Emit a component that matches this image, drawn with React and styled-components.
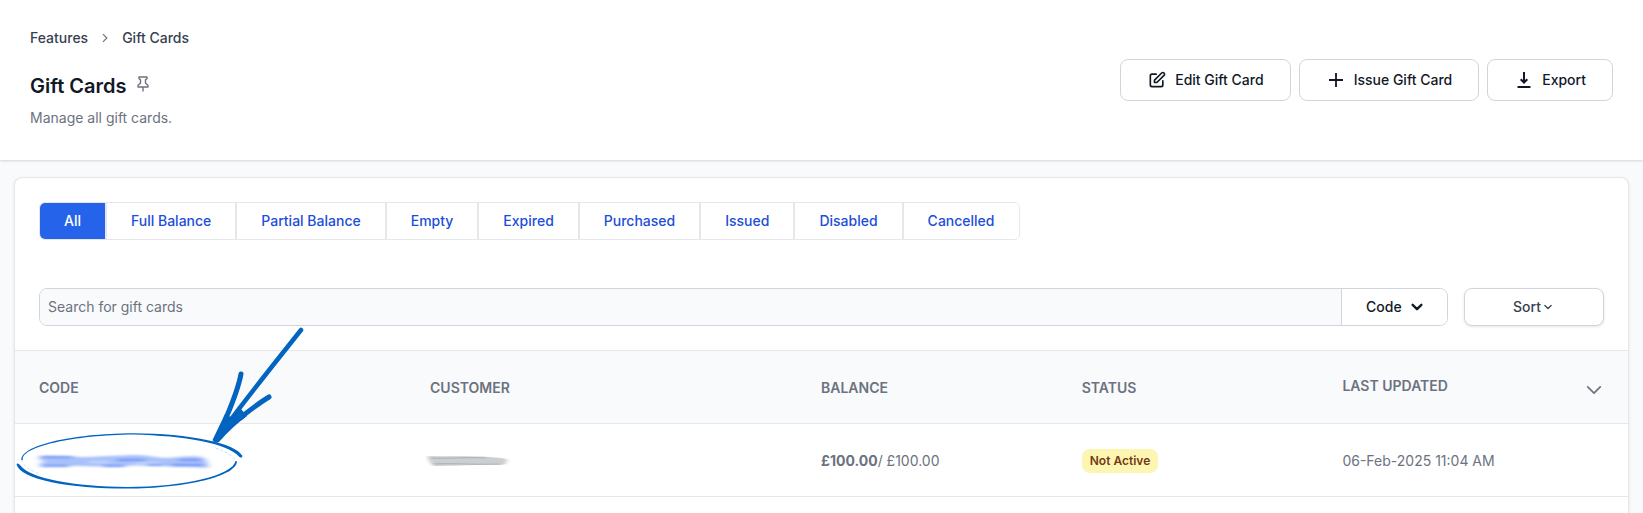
import React, { useState } from "react";
import styled, { createGlobalStyle, css } from "styled-components";

const TABS = [
  "All",
  "Full Balance",
  "Partial Balance",
  "Empty",
  "Expired",
  "Purchased",
  "Issued",
  "Disabled",
  "Cancelled",
];

function App() {
  const [active, setActive] = useState("All");

  return (
    <Page>
      <GlobalStyle />
      <Header>
        <Breadcrumb aria-label="Breadcrumb">
          <a href="#features">Features</a>
          <svg width="12" height="12" viewBox="0 0 12 12" fill="none">
            <path d="M4 2.2 7.800 6 4 9.800" stroke="#6b7280" strokeWidth="1.2" />
          </svg>
          <a href="#gift-cards">Gift Cards</a>
        </Breadcrumb>
        <HeaderRow>
          <div>
            <TitleRow>
              <h1>Gift Cards</h1>
              <PinButton type="button" aria-label="Pin page">
                <PinIcon />
              </PinButton>
            </TitleRow>
            <Description>Manage all gift cards.</Description>
          </div>
          <Actions>
            <ActionButton type="button">
              <EditIcon />
              Edit Gift Card
            </ActionButton>
            <ActionButton type="button">
              <PlusIcon />
              Issue Gift Card
            </ActionButton>
            <ActionButton type="button">
              <ExportIcon />
              Export
            </ActionButton>
          </Actions>
        </HeaderRow>
      </Header>

      <Card>
        <Tabs>
          {TABS.map((tab) => (
            <Tab
              key={tab}
              type="button"
              $active={tab === active}
              onClick={() => setActive(tab)}
            >
              {tab}
            </Tab>
          ))}
        </Tabs>

        <Filters>
          <SearchGroup>
            <SearchInput
              type="text"
              aria-label="Search for gift cards"
              placeholder="Search for gift cards"
            />
            <SelectWrap>
              <select aria-label="Search by" defaultValue="Code">
                <option>Code</option>
                <option>Customer</option>
              </select>
              <Chevron size={14} weight={4} />
            </SelectWrap>
          </SearchGroup>
          <SortButton type="button">
            Sort
            <Chevron size={10} weight={3} />
          </SortButton>
        </Filters>

        <Table>
          <colgroup>
            <Col $width={24} />
            <Col $width={24} />
            <Col $width={16} />
            <Col $width={16} />
            <Col $width={19} />
          </colgroup>
          <thead>
            <tr>
              <th>Code</th>
              <th>Customer</th>
              <th>Balance</th>
              <th>Status</th>
              <th>
                <SortHeader type="button">
                  Last updated
                  <Chevron size={20} weight={2} />
                </SortHeader>
              </th>
            </tr>
          </thead>
          <tbody>
            <tr>
              <CodeCell>
                <a href="#code" aria-label="Gift card code">
                  <CodeSmudge />
                </a>
                <Marker />
              </CodeCell>
              <td>
                <CustomerSmudge />
              </td>
              <td>
                <strong>£100.00</strong>/ £100.00
              </td>
              <td>
                <Badge>Not Active</Badge>
              </td>
              <td>06-Feb-2025 11:04 AM</td>
            </tr>
          </tbody>
        </Table>
      </Card>
    </Page>
  );
}

function Chevron({ size, weight }) {
  return (
    <svg width={size} height={size} viewBox="0 0 24 24" fill="none" aria-hidden="true">
      <path
        d="M4.5 8.25 12 15.75l7.5-7.5"
        stroke="currentColor"
        strokeWidth={weight}
        strokeLinecap="round"
        strokeLinejoin="round"
      />
    </svg>
  );
}

function PinIcon() {
  return (
    <svg width="12" height="16" viewBox="0 0 12 16" fill="none" aria-hidden="true">
      <path
        d="M2 1h8v1.6L8.5 3.8v3.4L11 9.2V11H1V9.2l2.5-2V3.8L2 2.6ZM6 11v4.5"
        stroke="#6b7280"
        strokeWidth="1.4"
        strokeLinejoin="round"
      />
    </svg>
  );
}

function EditIcon() {
  return (
    <svg width="20" height="20" viewBox="0 0 24 24" fill="none" aria-hidden="true">
      <path
        d="M11 5H6a2 2 0 0 0-2 2v11a2 2 0 0 0 2 2h11a2 2 0 0 0 2-2v-5m-1.414-9.414a2 2 0 1 1 2.828 2.828L11.828 15H9v-2.828l8.586-8.586z"
        stroke="currentColor"
        strokeWidth="2"
        strokeLinecap="round"
        strokeLinejoin="round"
      />
    </svg>
  );
}

function PlusIcon() {
  return (
    <svg width="20" height="20" viewBox="0 0 20 20" fill="none" aria-hidden="true">
      <path d="M10 3v14M3 10h14" stroke="currentColor" strokeWidth="1.8" />
    </svg>
  );
}

function ExportIcon() {
  return (
    <svg width="20" height="20" viewBox="0 0 20 20" fill="none" aria-hidden="true">
      <path
        d="M10 2v11M6.700 9.200 10 12.500l3.300-3.300M3.500 17h13"
        stroke="currentColor"
        strokeWidth="2"
      />
    </svg>
  );
}

function CodeSmudge() {
  return (
    <Smudge width="180" height="14" viewBox="0 0 180 14" fill="none">
      <filter id="code-smudge" x="-10%" y="-60%" width="120%" height="220%">
        <feGaussianBlur stdDeviation="3 0.8" />
      </filter>
      <g filter="url(#code-smudge)">
        <path
          d="M0 2C20 1 34 3 44 3S86 1 98 1s20 3 28 3 28-3 36-1 5 6 8 9-16 1-28 1-14-1-24-1-18-1-32 0-60 0-82 0c-6 0-3-3 2-5C0 7 0 4 0 2Z"
          fill="#a9c1fb"
        />
        <path
          d="M2 12h28M64 12h22M132 11h32M108 11h16M2 3h32M78 6h28M140 6h22"
          stroke="#5583f4"
          strokeWidth="2"
          opacity="0.8"
        />
        <path d="M50 8h20M96 9h26" stroke="#c5d6fd" strokeWidth="2" />
      </g>
    </Smudge>
  );
}

function CustomerSmudge() {
  return (
    <Smudge width="90" height="14" viewBox="0 0 90 14" fill="none">
      <filter id="customer-smudge" x="-20%" y="-60%" width="140%" height="220%">
        <feGaussianBlur stdDeviation="2 0.7" />
      </filter>
      <g filter="url(#customer-smudge)">
        <path d="M-2 2c20 1 60-1 78 3 2 2 0 6-5 6C50 10 20 12 4 12 0 10-2 5-2 2Z" fill="#cccfd2" />
        <path d="M3 10c20-1 45 1 66 0M0 4c20 1 30-1 56 0" stroke="#a3a8ae" opacity="0.8" />
      </g>
    </Smudge>
  );
}

// hand-drawn arrow and circle pointing at the first code
function Marker() {
  return (
    <MarkerSvg width="300" height="180" viewBox="15 324 300 180" aria-hidden="true">
      <g fill="none" stroke="#0364c0" strokeLinecap="round">
        <path d="M301 330C282 354 256 386 232 418" strokeWidth="4.500" />
        <path d="M241 374C238 390 232 404 226 418" strokeWidth="5" />
        <path d="M269 397C259 403 250 410 240 418" strokeWidth="5" />
        <path d="M236 464C236 458 229 452 215 448" strokeWidth="1" strokeDasharray="2 3" opacity="0.2" />
        <path d="M22 460C23 466 29 470 40 474" strokeWidth="1" strokeDasharray="2 3" opacity="0.2" />
      </g>
      <g fill="#0364c0">
        <path d="M212.500 440 225 414 231 417 241 409 247 416Q232 427 219 442Q214 444 212.500 440Z" />
        <path d="M21.500 460C20 446 70 433.500 133 433.200C190 433.500 236 443 242.500 456Q242 458.500 239.500 457C227 443 185 436 133 434.600C75 435 20 447 23 460Z" />
        <path d="M16.500 464Q18 462.500 20 465C30 479 75 486.500 127 487C185 487 233 475 235.500 461L236.800 461C238 476 185 488.500 127 488.600C70 488.500 20 480 16.500 464Z" />
      </g>
    </MarkerSvg>
  );
}

const GlobalStyle = createGlobalStyle`
  * {
    box-sizing: border-box;
  }

  body {
    margin: 0;
    background: #f9fafb;
    color: #6b7280;
    font-family: Inter, "Liberation Sans", sans-serif;
    font-size: 14px;
    line-height: 20px;
  }

  button,
  input,
  select {
    font: inherit;
    margin: 0;
  }

  a {
    color: inherit;
    text-decoration: none;
  }

  svg {
    display: block;
    flex-shrink: 0;
  }
`;

const Page = styled.div`
  display: flex;
  flex-direction: column;
  min-height: 100vh;
`;

const Header = styled.header`
  padding: 28px 30px 32px;
  background: #fff;
  box-shadow: 0 1px 3px rgba(0, 0, 0, 0.1), 0 1px 2px rgba(0, 0, 0, 0.06);
`;

const Breadcrumb = styled.nav`
  display: flex;
  align-items: center;
  gap: 11px;
  color: #374151;
  font-weight: 500;
`;

const HeaderRow = styled.div`
  display: flex;
  justify-content: space-between;
  align-items: flex-start;
  padding-top: 11px;
`;

const TitleRow = styled.div`
  display: flex;
  align-items: center;
  gap: 10px;
  padding-top: 12px;

  h1 {
    margin: 0;
    color: #111827;
    font-size: 20px;
    font-weight: 600;
    line-height: 30px;
  }
`;

const PinButton = styled.button`
  padding: 0 0 4px;
  border: 0;
  background: none;
  cursor: pointer;
`;

const Description = styled.p`
  margin: 7px 0 0;
`;

const Actions = styled.div`
  display: flex;
  gap: 8px;
`;

const ActionButton = styled.button`
  display: flex;
  align-items: center;
  gap: 8px;
  height: 42px;
  padding: 0 26px;
  border: 1px solid #d1d5db;
  border-radius: 8px;
  background: #fff;
  color: #111827;
  font-weight: 500;
  cursor: pointer;
`;

const Card = styled.main`
  flex: 1;
  margin: 17px 14px 0;
  border: 1px solid #e5e7eb;
  border-bottom: 0;
  border-radius: 8px 8px 0 0;
  background: #fff;
  box-shadow: 0 1px 3px rgba(0, 0, 0, 0.1);
`;

const Tabs = styled.div`
  display: flex;
  width: fit-content;
  margin: 24px 24px 0;
  border: 1px solid #e5e7eb;
  border-radius: 6px;
  overflow: hidden;
`;

const Tab = styled.button`
  height: 36px;
  padding: 0 24px;
  border: 0;
  background: #fff;
  color: #1d4ed8;
  font-weight: 500;
  cursor: pointer;

  & + & {
    border-left: 2px solid #e5e7eb;
  }

  ${({ $active }) =>
    $active &&
    css`
      background: #2563eb;
      color: #fff;
    `}
`;

const Filters = styled.div`
  display: flex;
  gap: 16px;
  padding: 48px 24px 24px;
`;

const SearchGroup = styled.div`
  display: flex;
  flex: 1;
  height: 38px;
  border: 1px solid #d1d5db;
  border-radius: 8px;
  overflow: hidden;
`;

const SearchInput = styled.input`
  flex: 1;
  min-width: 0;
  padding: 0 8px;
  border: 0;
  background: #f9fafb;
  color: #111827;

  &::placeholder {
    color: #6b7280;
    opacity: 1;
  }
`;

const SelectWrap = styled.div`
  display: flex;
  position: relative;
  align-items: center;
  color: #111827;

  select {
    width: 106px;
    height: 36px;
    padding: 0 24px;
    border: 0;
    border-left: 1px solid #d1d5db;
    appearance: none;
    background: #fff;
    color: inherit;
    font-weight: 500;
    cursor: pointer;
  }

  svg {
    position: absolute;
    right: 23px;
    pointer-events: none;
  }
`;

const SortButton = styled.button`
  display: flex;
  align-items: center;
  justify-content: center;
  gap: 2px;
  width: 140px;
  height: 38px;
  padding: 0 18px 0 16px;
  border: 1px solid #d1d5db;
  border-radius: 8px;
  background: #fff;
  box-shadow: 0 1px 3px rgba(0, 0, 0, 0.1);
  color: #374151;
  font-weight: 500;
  cursor: pointer;
`;

const Table = styled.table`
  width: 100%;
  border-top: 1px solid #e5e7eb;
  border-spacing: 0;
  table-layout: fixed;

  th,
  td {
    height: 73px;
    padding: 2px 24px 0;
    border-bottom: 1px solid #e5e7eb;
    text-align: left;
    vertical-align: middle;
  }

  th {
    background: #f9fafb;
    font-weight: 600;
    text-transform: uppercase;
  }

  strong {
    font-weight: 700;
  }
`;

const Col = styled.col`
  width: ${({ $width }) => $width}%;
`;

const SortHeader = styled.button`
  display: flex;
  justify-content: space-between;
  align-items: flex-start;
  width: 100%;
  padding: 0;
  border: 0;
  background: none;
  color: inherit;
  text-transform: inherit;
  cursor: pointer;

  svg {
    margin-top: 4px;
  }
`;

const CodeCell = styled.td`
  position: relative;
`;

const Smudge = styled.svg`
  overflow: visible;
`;

const MarkerSvg = styled.svg`
  position: absolute;
  top: -100px;
  left: 0;
  pointer-events: none;
`;

const Badge = styled.span`
  display: inline-block;
  padding: 2px 8px;
  border-radius: 8px;
  background: #fdf6b2;
  color: #723b13;
  font-size: 12px;
  font-weight: 600;
`;

export default App;
